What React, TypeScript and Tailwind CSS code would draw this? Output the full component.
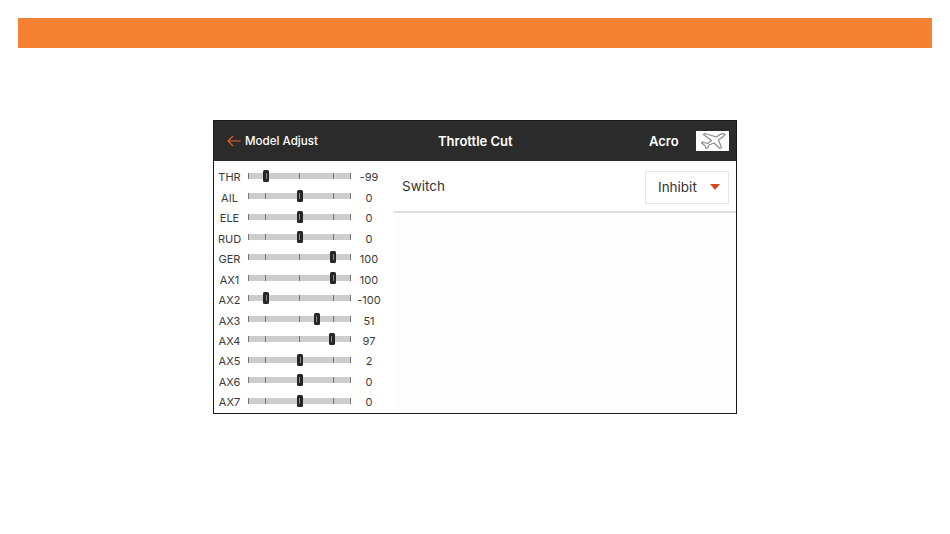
const rows: [string, number, string][] = [
  ["THR", -99, "-99"],
  ["AIL", 0, "0"],
  ["ELE", 0, "0"],
  ["RUD", 0, "0"],
  ["GER", 100, "100"],
  ["AX1", 100, "100"],
  ["AX2", -100, "-100"],
  ["AX3", 51, "51"],
  ["AX4", 97, "97"],
  ["AX5", 2, "2"],
  ["AX6", 0, "0"],
  ["AX7", 0, "0"],
];

function Slider({ value }: { value: number }) {
  const ticks = [0, 17, 51, 85, 102];
  return (
    <div className="relative w-[103px] h-[6px] bg-[#cdcdcd]">
      {ticks.map((t) => (
        <span key={t} className="absolute top-0 w-px h-[6px] bg-[#777]" style={{ left: t }} />
      ))}
      <span
        className="absolute top-[-3px] w-[6px] h-[12px] rounded-[1.5px] bg-[#262626] flex items-center justify-center"
        style={{ left: 48.5 + value * 0.335 }}
      >
        <span className="w-px h-[6px] bg-[#8a8a8a]" />
      </span>
    </div>
  );
}

function Plane() {
  return (
    <svg width="26" height="18" viewBox="0 0 26 18" fill="none" stroke="#8c8c8c" strokeWidth="1.2" strokeLinejoin="round">
      <path d="M25 2 C23 1 20.5 2 18.5 3.5 L16.5 5 L5 1.5 L3.5 2.5 L11.5 8.5 L7.5 11.5 L2.5 10 L1.5 11 L5 13.5 L6 16.5 L7.5 16 L9 13 L14 11 L20 16.5 L21.5 15.5 L18.5 8 L22 5.5 C24 4 25.5 3 25 2 Z" />
    </svg>
  );
}

export default function App() {
  return (
    <div className="w-[950px] h-[534px] bg-white pt-[18px] font-['Inter','Liberation_Sans',sans-serif]">
      <div className="mx-[18px] w-[914px] h-[30px] bg-[#f58233]" />
      <div className="ml-[213px] mt-[72px] w-[524px] h-[294px] border border-[#1a1a1a] flex flex-col bg-white">
        <header className="h-[40px] shrink-0 bg-[#2b2b2b] flex items-center text-white pl-[13px] pr-[7px]">
          <svg width="14" height="12" viewBox="0 0 14 12" fill="none" stroke="#e8622c" strokeWidth="1.1" className="mr-[4px]">
            <path d="M13.5 6 H1 M6 1 L1 6 L6 11" />
          </svg>
          <span className="w-[193px] pt-[1px] text-[11.6px] font-medium">Model Adjust</span>
          <span className="w-[76px] pt-[1px] whitespace-nowrap text-[13px] font-semibold">Throttle Cut</span>
          <span className="ml-[135px] pt-[1px] text-[13px] font-semibold">Acro</span>
          <span className="ml-auto w-[33px] h-[20px] bg-white flex items-center justify-center">
            <Plane />
          </span>
        </header>
        <div className="flex flex-1 min-h-0">
          <aside className="w-[180px] shrink-0 pt-[4.5px] bg-white">
            {rows.map(([label, v, text]) => (
              <div key={label} className="h-[20.45px] flex items-center text-[11px] text-[#3a3a3a]">
                <span className="w-[34px] pr-[3px] text-center translate-y-[1.5px]">{label}</span>
                <Slider value={v} />
                <span className="w-[36px] text-center translate-y-[1.5px]">{text}</span>
              </div>
            ))}
          </aside>
          <main className="flex-1 bg-[#fdfdfd]">
            <div className="h-[52px] bg-white border-b-2 border-[#e0e0e0] flex items-center justify-between pl-[8px] pr-[7px] pt-[1px]">
              <span className="text-[13.5px] text-[#333]">Switch</span>
              <div className="w-[84px] h-[33px] mt-[1px] bg-white border border-[#e6e6e6] flex items-center pl-[12px] text-[13.5px] text-[#333]">
                <span>Inhibit</span>
                <span className="ml-[13px] w-0 h-0 border-l-[5.5px] border-r-[5.5px] border-t-[6px] border-l-transparent border-r-transparent border-t-[#d9481c]" />
              </div>
            </div>
          </main>
        </div>
      </div>
    </div>
  );
}
